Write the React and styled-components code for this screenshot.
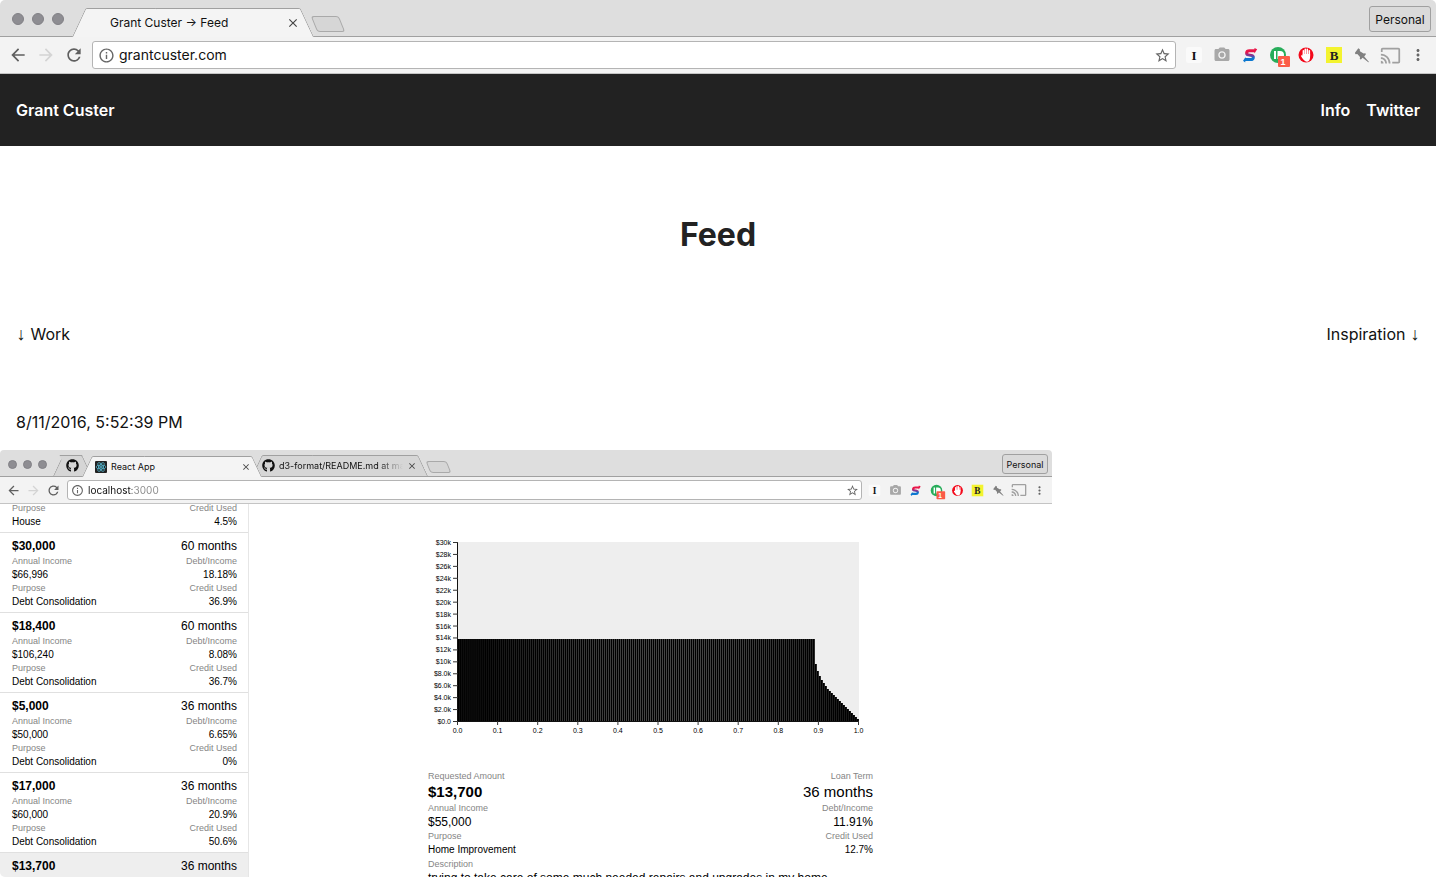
import React from "react";
import styled, { createGlobalStyle, ThemeProvider, css } from "styled-components";
import {
  MdArrowBack,
  MdArrowForward,
  MdCameraAlt,
  MdCast,
  MdClose,
  MdInfoOutline,
  MdMoreVert,
  MdRefresh,
  MdStarBorder,
} from "react-icons/md";
import { FaGithub } from "react-icons/fa";

const GlobalStyle = createGlobalStyle`
  *, *::before, *::after { box-sizing: border-box; }
  body {
    margin: 0;
    background: #fff;
    color: #222;
    font-family: Inter, "Liberation Sans", sans-serif;
    font-size: 16px;
    line-height: 24px;
  }
  button, input { font-family: inherit; margin: 0; }
  a { color: inherit; text-decoration: none; }
`;

/* Browser chrome metrics: the full-size window and the smaller one in the feed. */
const fullChrome = {
  strip: 37, tab: 29, tabFont: 12, dot: 12, dotGap: 8, stripPad: 12, slope: 25,
  toolbar: 37, slot: 28, navPad: 4, nav: 20, box: 28, boxPad: 6, boxFont: 14,
  info: 17, star: 17, ext: 18, extWidth: 242, gap: 9, toolGap: 4,
  plusW: 28, plusH: 16, plusMargin: 10, personH: 26, personW: 62, personFont: 12, personGap: 5,
  close: 14, closePad: 14, titleGap: 4,
};
const smallChrome = {
  strip: 27, tab: 21, tabFont: 9, dot: 9, dotGap: 6, stripPad: 8, slope: 25,
  toolbar: 27, slot: 20, navPad: 3, nav: 15, box: 20, boxPad: 4, boxFont: 10,
  info: 13, star: 13, ext: 13, extWidth: 178, gap: 6, toolGap: 4,
  plusW: 21, plusH: 12, plusMargin: 6, personH: 20, personW: 46, personFont: 9, personGap: 4,
  close: 10, closePad: 11, titleGap: 4,
};

/* ---------- chrome parts ---------- */

const Window = styled.div`
  height: 100vh;
  display: flex;
  flex-direction: column;
  overflow: hidden;
  border-radius: 5px;
  background: #fff;
`;

const TabStrip = styled.div`
  display: flex;
  align-items: flex-end;
  flex: none;
  height: ${(p) => p.theme.strip}px;
  padding-top: 2px;
  padding-left: ${(p) => p.theme.stripPad}px;
  padding-right: ${(p) => p.theme.personGap}px;
  background: #dedede;
  border-bottom: 1px solid #a0a0a0;
`;

const Dots = styled.div`
  display: flex;
  align-self: center;
  gap: ${(p) => p.theme.dotGap}px;
  margin-right: ${(p) => p.theme.dotGap}px;
`;

const Dot = styled.span`
  width: ${(p) => p.theme.dot}px;
  height: ${(p) => p.theme.dot}px;
  border-radius: 50%;
  background: #8e8d92;
  border: 1px solid #828186;
`;

const tabSide = css`
  content: "";
  position: absolute;
  z-index: -1;
  top: 0;
  bottom: 0;
  background: ${(p) => (p.$active ? "#f4f4f4" : "#d6d6d6")};
  border: 0 solid #a0a0a0;
  border-top-width: 1px;
`;

const TabBox = styled.div`
  position: relative;
  z-index: ${(p) => (p.$active ? 1 : 0)};
  display: flex;
  align-items: center;
  flex: 0 1 ${(p) => p.$width}px;
  min-width: 0;
  height: ${(p) => p.theme.tab}px;
  margin-bottom: ${(p) => (p.$active ? "-1px" : "0")};
  margin-left: ${(p) => (p.$overlap ? "-10px" : "0")};
  padding-left: ${(p) => p.$indent}px;
  padding-right: ${(p) => p.theme.closePad}px;
  gap: ${(p) => p.theme.titleGap}px;
  isolation: isolate;
  color: #111;
  font-size: ${(p) => p.theme.tabFont}px;
  line-height: 1;

  &::before {
    ${tabSide}
    left: 0;
    right: 50%;
    border-left-width: 1px;
    border-top-left-radius: 2px;
    transform: skewX(-${(p) => p.theme.slope}deg);
    transform-origin: bottom left;
  }
  &::after {
    ${tabSide}
    left: 40%;
    right: 0;
    border-right-width: 1px;
    border-top-right-radius: 2px;
    transform: skewX(${(p) => p.theme.slope}deg);
    transform-origin: bottom right;
  }
`;

const TabTitle = styled.span`
  flex: 1;
  min-width: 0;
  overflow: hidden;
  white-space: nowrap;
  line-height: 16px;
  ${(p) => p.$fade && "mask-image: linear-gradient(90deg, #000 80%, transparent);"}
`;

const IconButton = styled.button`
  display: flex;
  align-items: center;
  justify-content: center;
  flex: none;
  padding: 0;
  border: 0;
  background: none;
  color: ${(p) => (p.$muted ? "#d4d4d4" : "#5f5f5f")};
`;

const NavButton = styled(IconButton)`
  width: ${(p) => p.theme.slot}px;
`;

const NewTab = styled.button`
  flex: none;
  align-self: center;
  width: ${(p) => p.theme.plusW}px;
  height: ${(p) => p.theme.plusH}px;
  margin-top: ${(p) => p.theme.plusMargin}px;
  padding: 0;
  border: 1px solid #a9a9a9;
  border-radius: 3px;
  background: #d6d6d6;
  transform: skewX(22deg);
`;

const Personal = styled.button`
  align-self: center;
  flex: none;
  margin-left: auto;
  width: ${(p) => p.theme.personW}px;
  height: ${(p) => p.theme.personH}px;
  padding: 0;
  border: 1px solid #a0a0a0;
  border-radius: 3px;
  background: #dadada;
  color: #111;
  font-size: ${(p) => p.theme.personFont}px;
`;

const Toolbar = styled.div`
  display: flex;
  align-items: center;
  flex: none;
  height: ${(p) => p.theme.toolbar}px;
  padding: 0 ${(p) => p.theme.gap}px 0 ${(p) => p.theme.navPad}px;
  background: #f3f3f3;
  border-bottom: 1px solid #c4c4c4;
`;

const AddressBox = styled.div`
  display: flex;
  align-items: center;
  flex: 1;
  gap: 4px;
  min-width: 0;
  height: ${(p) => p.theme.box}px;
  margin-left: ${(p) => p.theme.toolGap}px;
  margin-right: ${(p) => p.theme.gap}px;
  padding: 0 ${(p) => p.theme.boxPad - 2}px 0 ${(p) => p.theme.boxPad - 1}px;
  border: 1px solid #b4b4b4;
  border-radius: 3px;
  background: #fff;
`;

const AddressInput = styled.input`
  flex: 1;
  min-width: 0;
  padding: 0 0 1px;
  border: 0;
  outline: 0;
  background: none;
  color: #111;
  font-size: ${(p) => p.theme.boxFont}px;
  ${(p) =>
    p.$hostWidth &&
    css`
      background: linear-gradient(90deg, #111 ${p.$hostWidth}px, #888 ${p.$hostWidth}px);
      -webkit-background-clip: text;
      background-clip: text;
      color: transparent;
    `}
`;

const Extensions = styled.div`
  display: flex;
  align-items: center;
  justify-content: space-between;
  flex: none;
  width: ${(p) => p.theme.extWidth}px;
`;

const ExtensionArt = styled.svg`
  display: block;
  overflow: visible;
  width: ${(p) => p.theme.ext}px;
  height: ${(p) => p.theme.ext}px;
`;

const ExtensionButton = styled(IconButton)`
  width: ${(p) => p.theme.ext}px;
  color: ${(p) => p.$tone || "#666"};
  svg {
    flex: none;
    width: ${(p) => p.theme.ext + (p.$grow || 0)}px;
    height: ${(p) => p.theme.ext + (p.$grow || 0)}px;
  }
`;

const ReactBadge = styled.svg`
  flex: none;
  width: 12px;
  height: 12px;
`;

function ReactMark() {
  return (
    <ReactBadge viewBox="0 0 24 24" aria-hidden="true">
      <rect width="24" height="24" rx="2" fill="#222" />
      <g fill="none" stroke="#55b8d2" strokeWidth="1.5">
        <ellipse cx="12" cy="12" rx="10" ry="4" />
        <ellipse cx="12" cy="12" rx="10" ry="4" transform="rotate(60 12 12)" />
        <ellipse cx="12" cy="12" rx="10" ry="4" transform="rotate(120 12 12)" />
      </g>
      <circle cx="12" cy="12" r="2" fill="#55b8d2" />
    </ReactBadge>
  );
}

function Tab({ title, icon, active, width, indent, overlap, fade, closable = true }) {
  return (
    <TabBox $active={active} $width={width} $indent={indent} $overlap={overlap}>
      {icon}
      {title && <TabTitle $fade={fade}>{title}</TabTitle>}
      {closable && (
        <IconButton aria-label="Close tab">
          <CloseMark />
        </IconButton>
      )}
    </TabBox>
  );
}

const CloseMark = styled(MdClose)`
  width: ${(p) => p.theme.close}px;
  height: ${(p) => p.theme.close}px;
  color: #444;
`;

function ExtensionIcons({ id }) {
  return (
    <Extensions>
      <ExtensionButton aria-label="Instapaper">
        <ExtensionArt viewBox="0 0 18 18">
          <rect x="1" y="1" width="16" height="16" rx="2" fill="#fafafa" />
          <text x="9" y="13.500" textAnchor="middle" fontFamily="Liberation Serif, serif" fontWeight="700" fontSize="13" fill="#111">I</text>
        </ExtensionArt>
      </ExtensionButton>
      <ExtensionButton aria-label="Screenshot" $tone="#a8a8a8">
        <MdCameraAlt />
      </ExtensionButton>
      <ExtensionButton aria-label="Stylish">
        <ExtensionArt viewBox="0 0 18 18">
          <defs>
            <linearGradient id={`${id}-s`} gradientUnits="userSpaceOnUse" x1="0" y1="3" x2="0" y2="16">
              <stop offset="0.25" stopColor="#ea1548" />
              <stop offset="0.5" stopColor="#7a3a9a" />
              <stop offset="0.7" stopColor="#0b78d0" />
            </linearGradient>
          </defs>
          <path
            d="M14.200 4.800H8.400C5 4.800 4.800 8.400 7.400 8.900l3.200.6c2.600.6 2.200 4.100-.8 4.100H3.800"
            fill="none"
            stroke={`url(#${id}-s)`}
            strokeWidth="3"
          />
          <path d="M13.500 2L16.200 3.300 13.300 7.500z" fill="#ea1548" />
          <path d="M4.800 11L2 14.800 4.200 16.600z" fill="#0b78d0" />
        </ExtensionArt>
      </ExtensionButton>
      <ExtensionButton aria-label="Pushbullet, 1 new">
        <ExtensionArt viewBox="0 0 18 18">
          <circle cx="9" cy="9" r="8" fill="#27ad5a" />
          <path d="M5 5h2v8H5z" fill="#fff" />
          <path d="M8.500 5H11a4 4 0 0 1 0 8H8.500z" fill="#fff" />
          <rect x="9" y="10" width="12" height="11" rx="1" fill="#fb5c47" />
          <text x="14" y="19" textAnchor="middle" fontFamily="Liberation Sans, sans-serif" fontWeight="700" fontSize="9" fill="#fff">1</text>
        </ExtensionArt>
      </ExtensionButton>
      <ExtensionButton aria-label="AdBlock">
        <ExtensionArt viewBox="0 0 18 18">
          <circle cx="9" cy="9" r="7.500" fill="#f3091b" />
          <g stroke="#fff" strokeWidth="1.600" strokeLinecap="round">
            <path d="M6.400 4.800v5M8.300 3.400v6M10.300 3.400v6M12.300 4.800v5" />
          </g>
          <path d="M5.700 8h7.400v3c0 2.800-1.300 4.800-3.300 4.800S6.400 13.800 4.200 10.600c-.5-1 .6-1.700 1.500-.9z" fill="#fff" />
        </ExtensionArt>
      </ExtensionButton>
      <ExtensionButton aria-label="Bookmarks">
        <ExtensionArt viewBox="0 0 18 18">
          <rect x="1" y="1" width="16" height="16" fill="#f3f32f" />
          <text x="9" y="13.500" textAnchor="middle" fontFamily="Liberation Serif, serif" fontWeight="700" fontSize="13" fill="#222">B</text>
        </ExtensionArt>
      </ExtensionButton>
      <ExtensionButton aria-label="Pin">
        <ExtensionArt viewBox="0 0 18 18" fill="#808080">
          <path d="M5.300 2.300L6.800 3.300 6.900 5.200 10.600 7.400 12.400 7.200 12.900 8.300 11.200 10.500 16 15.900 15.300 16.200 9.600 11.800 7.900 13.600 6.800 13 7 11 4.300 8 2.600 8.300 1.800 7z" />
        </ExtensionArt>
      </ExtensionButton>
      <ExtensionButton aria-label="Cast" $tone="#a0a0a0" $grow={3}>
        <MdCast />
      </ExtensionButton>
      <ExtensionButton aria-label="Menu">
        <MdMoreVert />
      </ExtensionButton>
    </Extensions>
  );
}

const sized = (Icon, key) => styled(Icon)`
  flex: none;
  width: ${(p) => p.theme[key]}px;
  height: ${(p) => p.theme[key]}px;
  color: #666;
`;
const InfoMark = sized(MdInfoOutline, "info");
const StarMark = sized(MdStarBorder, "star");

const NavIcon = styled.span`
  display: flex;
  svg {
    width: ${(p) => p.theme.nav}px;
    height: ${(p) => p.theme.nav}px;
  }
`;

function BrowserChrome({ id, address, hostWidth, children }) {
  return (
    <>
      <TabStrip>
        <Dots>
          <Dot />
          <Dot />
          <Dot />
        </Dots>
        {children}
        <NewTab aria-label="New tab" />
        <Personal>Personal</Personal>
      </TabStrip>
      <Toolbar>
        <NavButton aria-label="Back"><NavIcon><MdArrowBack /></NavIcon></NavButton>
        <NavButton aria-label="Forward" $muted><NavIcon><MdArrowForward /></NavIcon></NavButton>
        <NavButton aria-label="Reload"><NavIcon><MdRefresh /></NavIcon></NavButton>
        <AddressBox>
          <InfoMark />
          <AddressInput aria-label="Address" defaultValue={address} $hostWidth={hostWidth} />
          <StarMark />
        </AddressBox>
        <ExtensionIcons id={id} />
      </Toolbar>
    </>
  );
}

/* ---------- site ---------- */

const SiteHeader = styled.header`
  display: flex;
  align-items: center;
  justify-content: space-between;
  flex: none;
  height: 72px;
  padding: 0 16px;
  background: #222;
  color: #fff;
  font-weight: 600;
`;

const SiteNav = styled.nav`
  display: flex;
  gap: 16px;
`;

const Title = styled.h1`
  margin: 64px 0 62px;
  text-align: center;
  font-size: 32px;
  line-height: 50px;
  font-weight: 700;
`;

const Columns = styled.nav`
  display: flex;
  justify-content: space-between;
  padding: 0 16px;
  margin-bottom: 64px;
  color: #111;
`;

const Arrow = styled.span`
  display: inline-block;
  width: 10px;
  text-align: center;
  font-family: "Liberation Sans", Arial, sans-serif;
  font-size: 18px;
  font-weight: 700;
  line-height: 16px;
`;

const PostDate = styled.time`
  display: block;
  padding: 0 16px;
  margin-bottom: 16px;
  color: #111;
`;

const Shot = styled.div`
  display: flex;
  flex-direction: column;
  max-width: 1052px;
  height: 640px;
  overflow: hidden;
  border-radius: 4px;
  background: #fff;
`;

/* ---------- loan app shown in the post ---------- */

const LoanApp = styled.div`
  display: flex;
  flex: 1;
  min-height: 0;
  overflow: hidden;
  color: #000;
  font-family: "Liberation Sans", Arial, sans-serif;
`;

const LoanList = styled.div`
  flex: none;
  display: flex;
  flex-direction: column;
  justify-content: flex-start;
  width: 249px;
  margin-top: -2px;
  border-right: 1px solid #e6e6e6;
`;

const Loan = styled.div`
  padding: ${(p) => (p.$partial ? 0 : 4)}px 11px 3px 12px;
  border-bottom: 1px solid #e0e0e0;
  background: ${(p) => (p.$selected ? "#eee" : "transparent")};
`;

const Line = styled.div`
  display: flex;
  justify-content: space-between;
  font-size: ${(p) => p.$size}px;
  line-height: ${(p) => p.$height}px;
  color: ${(p) => (p.$label ? "#858585" : "#000")};
`;

const LoanDetail = styled.section`
  flex: 1;
  min-width: 0;
  display: flex;
  flex-direction: column;
  align-items: center;
  padding-top: 32px;
`;

const DetailColumn = styled.div`
  width: 100%;
  max-width: 445px;
`;

const ChartArt = styled.svg`
  display: block;
  width: 100%;
  margin-bottom: 27px;
  overflow: visible;
`;

const loans = [
  { purpose: "House", credit: "4.5%", partial: true },
  { amount: "$30,000", term: "60 months", income: "$66,996", debt: "18.18%", purpose: "Debt Consolidation", credit: "36.9%" },
  { amount: "$18,400", term: "60 months", income: "$106,240", debt: "8.08%", purpose: "Debt Consolidation", credit: "36.7%" },
  { amount: "$5,000", term: "36 months", income: "$50,000", debt: "6.65%", purpose: "Debt Consolidation", credit: "0%" },
  { amount: "$17,000", term: "36 months", income: "$60,000", debt: "20.9%", purpose: "Debt Consolidation", credit: "50.6%" },
  { amount: "$13,700", term: "36 months", income: "$55,000", debt: "11.91%", purpose: "Home Improvement", credit: "12.7%", selected: true },
];

function LoanRow({ loan }) {
  return (
    <Loan $partial={loan.partial} $selected={loan.selected}>
      {!loan.partial && (
        <>
          <Line $size={12} $height={18}><b>{loan.amount}</b><span>{loan.term}</span></Line>
          <Line $size={9} $height={13} $label><span>Annual Income</span><span>Debt/Income</span></Line>
          <Line $size={10} $height={14}><span>{loan.income}</span><span>{loan.debt}</span></Line>
        </>
      )}
      <Line $size={9} $height={13} $label><span>Purpose</span><span>Credit Used</span></Line>
      <Line $size={10} $height={14}><span>{loan.purpose}</span><span>{loan.credit}</span></Line>
    </Loan>
  );
}

const yLabels = ["$30k", "$28k", "$26k", "$24k", "$22k", "$20k", "$18k", "$16k", "$14k", "$12k", "$10k", "$8.0k", "$6.0k", "$4.0k", "$2.0k", "$0.0"];
const xLabels = ["0.0", "0.1", "0.2", "0.3", "0.4", "0.5", "0.6", "0.7", "0.8", "0.9", "1.0"];
const tail = [57, 50, 45, 41, 38, 35, 32, 30, 28, 26, 24, 22, 20, 18, 16, 14, 12, 10, 8, 6, 4, 2];
const bars = [...Array(178).fill(82), ...tail];
const plot = { left: 30, top: 6, width: 401, height: 179 };

function Chart() {
  const base = plot.top + plot.height;
  return (
    <ChartArt viewBox="0 0 445 206" fontSize="7" role="img" aria-label="Loan amount chart">
      <rect x={plot.left} y={plot.top} width={plot.width} height={plot.height} fill="#eee" />
      {bars.map((h, i) => (
        <rect key={i} x={plot.left + (i * plot.width) / 200} y={base - h} width="1.930" height={h} />
      ))}
      <path d={`M${plot.left - 0.5} ${plot.top}V${base + 0.5}H${plot.left + plot.width}`} fill="none" stroke="#111" />
      {yLabels.map((label, i) => {
        const y = plot.top + 0.5 + (i * plot.height) / 15;
        return (
          <g key={label}>
            <path d={`M25 ${y}h5`} stroke="#333" />
            <text x="23" y={y + 2.5} textAnchor="end">{label}</text>
          </g>
        );
      })}
      {xLabels.map((label, i) => {
        const x = plot.left - 0.5 + (i * plot.width) / 10;
        return (
          <g key={label}>
            <path d={`M${x} ${base}v4`} stroke="#333" />
            <text x={x} y={base + 12} textAnchor="middle">{label}</text>
          </g>
        );
      })}
    </ChartArt>
  );
}

function Detail() {
  return (
    <LoanDetail>
      <DetailColumn>
        <Chart />
        <Line $size={9} $height={14} $label><span>Requested Amount</span><span>Loan Term</span></Line>
        <Line $size={15} $height={18}><b>$13,700</b><span>36 months</span></Line>
        <Line $size={9} $height={14} $label><span>Annual Income</span><span>Debt/Income</span></Line>
        <Line $size={12} $height={14}><span>$55,000</span><span>11.91%</span></Line>
        <Line $size={9} $height={14} $label><span>Purpose</span><span>Credit Used</span></Line>
        <Line $size={10} $height={14}><span>Home Improvement</span><span>12.7%</span></Line>
        <Line $size={9} $height={14} $label><span>Description</span></Line>
        <Line $size={12} $height={14}>
          <span>trying to take care of some much needed repairs and upgrades in my home</span>
        </Line>
      </DetailColumn>
    </LoanDetail>
  );
}

export default function App() {
  return (
    <Window>
      <GlobalStyle />
      <ThemeProvider theme={fullChrome}>
        <BrowserChrome id="page" address="grantcuster.com">
          <Tab active width={242} indent={38} title="Grant Custer → Feed" />
        </BrowserChrome>
      </ThemeProvider>
      <SiteHeader>
        <a href="#home">Grant Custer</a>
        <SiteNav>
          <a href="#info">Info</a>
          <a href="#twitter">Twitter</a>
        </SiteNav>
      </SiteHeader>
      <main>
        <Title>Feed</Title>
        <Columns>
          <a href="#work"><Arrow>↓</Arrow> Work</a>
          <a href="#inspiration">Inspiration <Arrow>↓</Arrow></a>
        </Columns>
        <article>
          <PostDate>8/11/2016, 5:52:39 PM</PostDate>
          <Shot>
            <ThemeProvider theme={smallChrome}>
              <BrowserChrome id="shot" address="localhost:3000" hostWidth={44}>
                <Tab width={39} indent={13} icon={<FaGithub size={13} />} closable={false} />
                <Tab active overlap width={180} indent={13} icon={<ReactMark />} title="React App" />
                <Tab
                  overlap
                  fade
                  width={176}
                  indent={10}
                  icon={<FaGithub size={13} />}
                  title="d3-format/README.md at mas"
                />
              </BrowserChrome>
            </ThemeProvider>
            <LoanApp>
              <LoanList>
                {loans.map((loan, i) => (
                  <LoanRow key={i} loan={loan} />
                ))}
              </LoanList>
              <Detail />
            </LoanApp>
          </Shot>
        </article>
      </main>
    </Window>
  );
}
